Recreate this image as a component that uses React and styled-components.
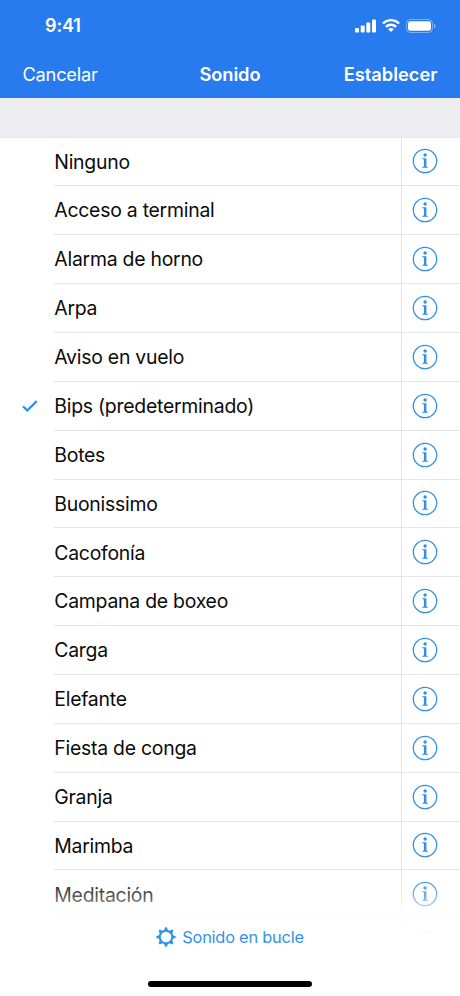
import { useState } from 'react'
import styled, { createGlobalStyle } from 'styled-components'

const SOUNDS = [
	'Ninguno',
	'Acceso a terminal',
	'Alarma de horno',
	'Arpa',
	'Aviso en vuelo',
	'Bips (predeterminado)',
	'Botes',
	'Buonissimo',
	'Cacofonía',
	'Campana de boxeo',
	'Carga',
	'Elefante',
	'Fiesta de conga',
	'Granja',
	'Marimba',
	'Meditación',
]

const GlobalStyle = createGlobalStyle`
	* {
		box-sizing: border-box;
	}

	body {
		margin: 0;
		background: #fff;
		font-family: Inter, 'Liberation Sans', sans-serif;
	}
`

const Button = styled.button`
	padding: 0;
	border: 0;
	background: none;
	color: inherit;
	font-family: inherit;
	cursor: pointer;
`

const Screen = styled.div`
	position: relative;
	display: flex;
	flex-direction: column;
	width: 460px;
	height: 996px;
	overflow: hidden;
	background: #fff;
`

const Header = styled.header`
	flex: none;
	height: 98px;
	color: #fff;
	background: #277bee;
`

const StatusBar = styled.div`
	display: flex;
	align-items: center;
	justify-content: space-between;
	height: 51px;
	padding: 0 24px 0 45px;
`

const Time = styled.span`
	font-size: 18px;
	font-weight: 600;
	letter-spacing: -0.1px;
`

const StatusIcons = styled.div`
	display: flex;
	align-items: center;
	gap: 6px;

	& svg {
		display: block;
	}
`

const NavBar = styled.nav`
	display: grid;
	grid-template-columns: 1fr auto 1fr;
	align-items: center;
	height: 46px;
	padding: 0 22.5px;
`

const NavTitle = styled.h1`
	margin: 0;
	font-size: 18.3px;
	font-weight: 600;
	letter-spacing: -0.1px;
`

const NavButton = styled(Button)`
	justify-self: ${({ $end }) => ($end ? 'end' : 'start')};
	font-size: 18.3px;
	font-weight: ${({ $strong }) => ($strong ? 600 : 400)};
	letter-spacing: ${({ $strong }) => ($strong ? '0' : '-0.25px')};
`

const SectionGap = styled.div`
	flex: none;
	height: 39.5px;
	background: #eeeef2;
	border-bottom: 1px solid #e6e6e9;
`

const List = styled.ul`
	flex: none;
	margin: 0;
	padding: 0;
	list-style: none;
`

const Row = styled.li`
	display: grid;
	grid-template-columns: 54px 1fr;
	height: 48.87px;
`

const CheckCell = styled.div`
	display: flex;
	align-items: center;
	padding: 0 0 1px 22px;
`

const RowBody = styled.div`
	display: flex;
	border-bottom: 1px solid #e5e5e7;
`

const SoundName = styled(Button)`
	flex: 1;
	padding: 0.4px 0 0 0.3px;
	color: #0b0b0b;
	font-size: 19.4px;
	letter-spacing: -0.24px;
	text-align: left;
`

const InfoButton = styled(Button)`
	display: flex;
	align-items: center;
	width: 59px;
	padding: 0 0 0 10px;
	border-left: 1px solid #e5e5e7;
`

const Footer = styled.footer`
	position: absolute;
	right: 0;
	bottom: 0;
	left: 0;
	display: flex;
	flex-direction: column;
	align-items: center;
	height: 122px;
	padding-top: 52px;
	background: linear-gradient(
		rgba(255, 255, 255, 0) 0,
		rgba(255, 255, 255, 0.3) 22px,
		rgba(255, 255, 255, 0.82) 42px,
		rgba(255, 255, 255, 0.95) 57px,
		#fff 62px
	);
`

const LoopButton = styled(Button)`
	display: flex;
	align-items: center;
	gap: 6px;
	height: 22px;
	color: #3192e9;
	font-size: 16.4px;
	letter-spacing: -0.23px;
`

const HomeIndicator = styled.div`
	width: 164px;
	height: 6px;
	margin-top: 33px;
	border-radius: 3px;
	background: #000;
`

const SignalIcon = () => (
	<svg width="21" height="14" viewBox="0 0 21 14" fill="#fff">
		<rect x="0" y="9" width="4" height="4.5" rx="1.1" />
		<rect x="5.7" y="6.5" width="4" height="7" rx="1.1" />
		<rect x="11.3" y="3.5" width="4" height="10" rx="1.1" />
		<rect x="17" y="0.5" width="4" height="13" rx="1.1" />
	</svg>
)

const WifiIcon = () => (
	<svg width="18" height="13" viewBox="0 0 18 13" fill="none" stroke="#fff" strokeWidth="2.4">
		<path d="M.9 4.5a11.500 11.500 0 0 1 16.200 0" />
		<path d="M3.900 7.900a7.200 7.200 0 0 1 10.200 0" />
		<path d="M9 13 6.200 10.300a4.100 4.100 0 0 1 5.600 0Z" fill="#fff" stroke="none" />
	</svg>
)

const BatteryIcon = () => (
	<svg width="30" height="14" viewBox="0 0 30 14">
		<rect x="0.5" y="0.5" width="26" height="13" rx="4" fill="none" stroke="#fff" strokeOpacity="0.4" />
		<rect x="2" y="2.200" width="23" height="9.600" rx="2.400" fill="#fff" />
		<path d="M28 4.800v4.400c1-.4 1.600-1.200 1.600-2.200S29 5.200 28 4.800Z" fill="#fff" fillOpacity="0.45" />
	</svg>
)

const CheckIcon = () => (
	<svg width="16" height="12" viewBox="0 0 16 12" fill="none" stroke="#2c8fee" strokeWidth="2.2">
		<path d="m1 6.200 4.300 4.300L14.700 1.100" />
	</svg>
)

const InfoIcon = () => (
	<svg width="26" height="26" viewBox="0 0 26 26" fill="#318fe4">
		<circle cx="13" cy="13" r="11.700" fill="none" stroke="#318fe4" strokeWidth="1.250" />
		<circle cx="13.100" cy="7" r="1.700" />
		<path d="M10.200 10.200h4.200v8.400l1.500.4v.7h-5.700V19l1.700-.4v-7.200l-1.700-.4Z" />
	</svg>
)

const TEETH = [0, 45, 90, 135, 180, 225, 270, 315]

const GearIcon = () => (
	<svg width="20" height="20" viewBox="0 0 20 20" fill="#3192e9">
		<circle cx="10" cy="10" r="6.300" fill="none" stroke="#3192e9" strokeWidth="2" />
		{TEETH.map((angle) => (
			<path key={angle} d="M7.900 3.600 9.200.3h1.600l1.300 3.300Z" transform={`rotate(${angle} 10 10)`} />
		))}
	</svg>
)

const SoundRow = ({ name, checked, onSelect }) => (
	<Row>
		<CheckCell>{checked && <CheckIcon />}</CheckCell>
		<RowBody>
			<SoundName onClick={onSelect}>{name}</SoundName>
			<InfoButton aria-label="Información">
				<InfoIcon />
			</InfoButton>
		</RowBody>
	</Row>
)

export default function App() {
	const [selected, setSelected] = useState('Bips (predeterminado)')

	return (
		<Screen>
			<GlobalStyle />
			<Header>
				<StatusBar>
					<Time>9:41</Time>
					<StatusIcons>
						<SignalIcon />
						<WifiIcon />
						<BatteryIcon />
					</StatusIcons>
				</StatusBar>
				<NavBar>
					<NavButton>Cancelar</NavButton>
					<NavTitle>Sonido</NavTitle>
					<NavButton $end $strong>
						Establecer
					</NavButton>
				</NavBar>
			</Header>
			<SectionGap />
			<List>
				{SOUNDS.map((name) => (
					<SoundRow
						key={name}
						name={name}
						checked={name === selected}
						onSelect={() => setSelected(name)}
					/>
				))}
				{/* next row, almost hidden by the footer fade */}
				<SoundRow name="" />
			</List>
			<Footer>
				<LoopButton>
					<GearIcon />
					Sonido en bucle
				</LoopButton>
				<HomeIndicator />
			</Footer>
		</Screen>
	)
}
